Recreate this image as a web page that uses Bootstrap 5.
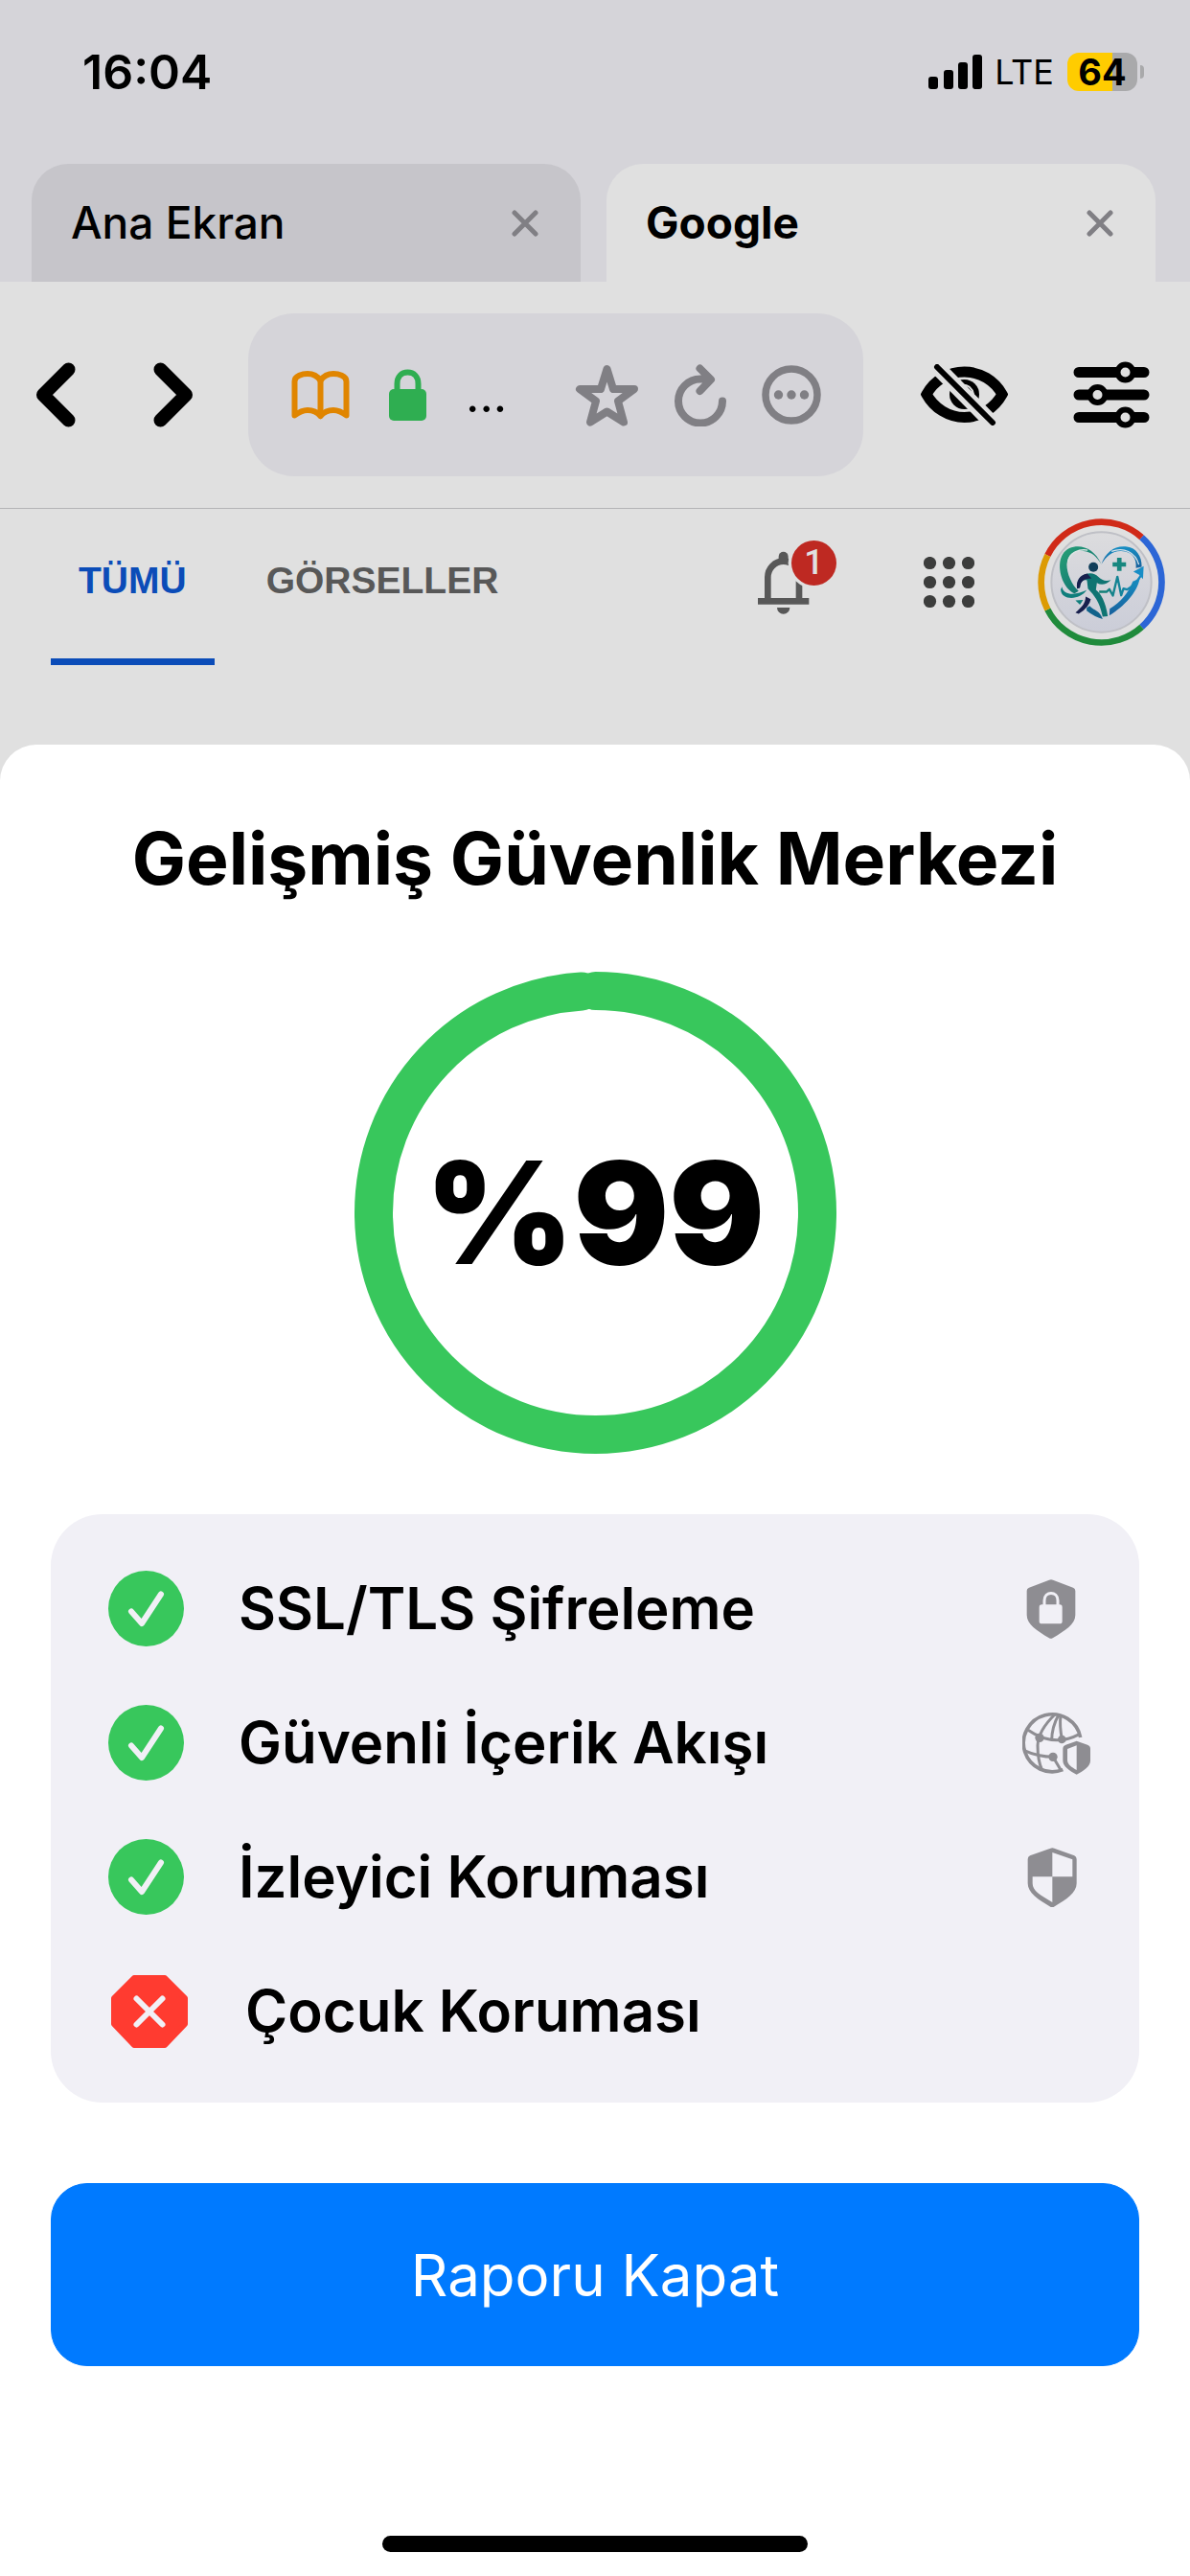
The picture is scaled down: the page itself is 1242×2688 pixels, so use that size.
<!DOCTYPE html>
<html lang="tr">
<head>
  <meta charset="UTF-8" />
  <meta name="viewport" content="width=device-width, initial-scale=1.0" />
  <title>Gelişmiş Güvenlik Merkezi</title>
  <link
    href="https://cdn.jsdelivr.net/npm/bootstrap@5.3.3/dist/css/bootstrap.min.css"
    rel="stylesheet"
  />
  <style>
    body {
      background: #e0e0e0;
      color: #000;
      font-family: Inter, "Liberation Sans", sans-serif;
    }
    svg { display: block; flex-shrink: 0; }
    .icon-btn {
      display: block;
      flex-shrink: 0;
      padding: 0;
      border: 0;
      background: none;
      color: inherit;
    }
    .stroke-icon {
      fill: none;
      stroke: currentColor;
      stroke-linecap: round;
      stroke-linejoin: round;
    }

    /* status bar and tabs */
    .top-area { background: #d5d4d9; }
    .status-bar { height: 150px; padding: 0 48px 0 86px; }
    .clock { font-size: 50px; font-weight: 600; }
    .carrier { font-size: 36px; margin: 0 14px 0 12px; }
    .battery {
      width: 73px;
      height: 40px;
      border-radius: 12px;
      background: linear-gradient(to right, #ffcc00 64%, #a9a9ab 64%);
      font-size: 38px;
      font-weight: 700;
      line-height: 40px;
    }
    .battery-cap { width: 4px; height: 14px; margin-left: 3px; border-radius: 0 4px 4px 0; background: #a9a9ab; }
    .tab-strip { gap: 27px; padding: 21px 36px 0 33px; }
    .page-tab {
      flex: 1 1 0;
      height: 123px;
      padding: 0 44px 0 41px;
      border-radius: 38px 38px 0 0;
      background: #c6c5ca;
      font-size: 46px;
      font-weight: 500;
    }
    .page-tab.current { background: #e0e0e0; font-weight: 700; }
    .page-tab a { color: #000; text-decoration: none; }
    .page-tab .icon-btn { color: #807f84; }

    /* toolbar */
    .toolbar { padding: 33px 42px 33px 37px; border-bottom: 1px solid #b4b4b6; }
    .history-btns { gap: 81px; }
    .tool-btns { gap: 68px; }
    .address-box {
      flex: 1 1 0;
      min-width: 0;
      height: 170px;
      gap: 37px;
      margin: 0 60px 0 57px;
      padding: 0 44px 0 45px;
      border-radius: 48px;
      background: #d5d4d9;
      color: #807f84;
    }
    .reader-icon { color: #e08500; }
    .lock-icon { color: #2fae51; }
    .address-input {
      flex: 1 1 0;
      width: 0;
      min-width: 0;
      padding: 0;
      border: 0;
      background: none;
      color: #000;
      font-size: 50px;
    }

    /* search page header */
    .search-header { height: 246px; padding: 0 26px 0 53px; }
    .search-nav { gap: 25px; font-family: "Liberation Sans", Arial, sans-serif; }
    .search-nav a {
      padding: 55px 29px 61px;
      border-bottom: 7px solid transparent;
      color: #585858;
      font-size: 39px;
      font-weight: 700;
      line-height: 40px;
      text-decoration: none;
    }
    .search-nav a.current { border-color: #0b4cb8; color: #0b4cb8; }
    .header-tools { height: 133px; margin-top: 10px; }
    .apps-btn { margin: 0 66px 0 91px; }
    .notice-count {
      width: 47px;
      height: 47px;
      background: #be2922;
      color: #e0e0e0;
      font: 500 36px/47px Roboto, sans-serif;
    }

    /* report sheet */
    .sheet { padding: 71px 53px 25px; border-radius: 38px 38px 0 0; background: #fff; }
    .sheet-title { margin: 0 0 70px; font-size: 75px; font-weight: 700; line-height: 96px; }
    .score-ring { width: 503px; height: 503px; }
    .score-text { font-size: 148px; font-weight: 900; line-height: 1; }
    .check-list {
      gap: 61px;
      margin: 63px 0 84px;
      padding: 59px 50px 56px 60px;
      border-radius: 54px;
      background: #f1f0f6;
      font-size: 60px;
      font-weight: 600;
      line-height: 79px;
    }
    .check-list li { gap: 57px; }
    .check-list .kind { color: #8e8d92; }
    .check-list .sign { color: #f1f0f6; stroke-width: 6px; }
    .close-report {
      --bs-btn-bg: #007aff;
      --bs-btn-border-color: #007aff;
      height: 191px;
      border-radius: 38px;
      font-size: 60px;
      font-weight: 400;
    }
    .home-indicator { width: 444px; height: 17px; border-radius: 9px; background: #000; }
  </style>
</head>
<body class="d-flex flex-column min-vh-100">

  <header class="top-area">
    <div class="status-bar d-flex align-items-center">
      <span class="clock me-auto">16:04</span>
      <svg width="57" height="36" viewBox="0 0 57 36" aria-hidden="true">
        <rect x="0" y="23" width="10" height="13" rx="3"/>
        <rect x="16" y="16" width="10" height="20" rx="3"/>
        <rect x="31" y="8" width="10" height="28" rx="3"/>
        <rect x="46" y="0" width="10" height="36" rx="3"/>
      </svg>
      <span class="carrier">LTE</span>
      <span class="battery text-center">64</span>
      <span class="battery-cap"></span>
    </div>

    <nav class="tab-strip d-flex">
      <div class="page-tab d-flex align-items-center justify-content-between">
        <a href="#">Ana Ekran</a>
        <button type="button" class="icon-btn" aria-label="Sekmeyi kapat">
          <svg class="stroke-icon" width="28" height="28" viewBox="0 0 28 28" stroke-width="5"><path d="M3 3l22 22M25 3L3 25"/></svg>
        </button>
      </div>
      <div class="page-tab current d-flex align-items-center justify-content-between">
        <a href="#">Google</a>
        <button type="button" class="icon-btn" aria-label="Sekmeyi kapat">
          <svg class="stroke-icon" width="28" height="28" viewBox="0 0 28 28" stroke-width="5"><path d="M3 3l22 22M25 3L3 25"/></svg>
        </button>
      </div>
    </nav>
  </header>

  <div class="toolbar d-flex align-items-center">
    <div class="history-btns d-flex">
      <button type="button" class="icon-btn" aria-label="Geri">
        <svg class="stroke-icon" width="42" height="68" viewBox="0 0 42 68" stroke-width="14"><path d="M34.5 7.5L8 34l26.5 26.500"/></svg>
      </button>
      <button type="button" class="icon-btn" aria-label="İleri">
        <svg class="stroke-icon" width="42" height="68" viewBox="0 0 42 68" stroke-width="14"><path d="M7.5 7.5L34 34 7.5 60.5"/></svg>
      </button>
    </div>

    <div class="address-box d-flex align-items-center">
      <button type="button" class="icon-btn reader-icon" aria-label="Okuyucu">
        <svg class="stroke-icon" width="61" height="52" viewBox="0 0 61 52" stroke-width="6">
          <path d="M30.500 11C27 6 22 4 17 4S3.500 6 3.500 12V47.500C8 44 12 42 17 42S27 44 30.500 48V11"/>
          <path d="M30.500 11C34 6 39 4 44 4S57.500 6 57.500 12V47.500C53 44 49 42 44 42S34 44 30.500 48"/>
        </svg>
      </button>
      <svg class="lock-icon mx-1" width="39" height="54" viewBox="0 0 39 54" aria-hidden="true">
        <path d="M8.500 24V15.500C8.500 8 13 3.500 19.500 3.500S30.500 8 30.500 15.500V24" fill="none" stroke="currentColor" stroke-width="6"/>
        <rect y="21" width="39" height="33" rx="5" fill="currentColor"/>
      </svg>
      <input class="address-input" type="text" value="..." aria-label="Adres" />
      <button type="button" class="icon-btn" aria-label="Favorilere ekle">
        <svg class="stroke-icon" width="67" height="65" viewBox="0 0 67 65" stroke-width="8"><path d="M33.500 5L40 26H62L45 38.500 51 60.500 33.500 49.500 16 60.500 22 38.500 5 26H27Z"/></svg>
      </button>
      <button type="button" class="icon-btn" aria-label="Yenile">
        <svg class="stroke-icon" width="54" height="65" viewBox="0 0 54 65" stroke-width="8"><path d="M50 38.500A23 23 0 1 1 27 15.500H37M26.500 4.500L38 16 26.500 28"/></svg>
      </button>
      <button type="button" class="icon-btn" aria-label="Diğer">
        <svg width="62" height="62" viewBox="0 0 62 62" fill="currentColor">
          <circle cx="31" cy="31" r="27" fill="none" stroke="currentColor" stroke-width="7.5"/>
          <circle cx="17.5" cy="31" r="4.7"/><circle cx="31" cy="31" r="4.7"/><circle cx="44.5" cy="31" r="4.7"/>
        </svg>
      </button>
    </div>

    <div class="tool-btns d-flex align-items-center">
      <button type="button" class="icon-btn" aria-label="Gizli mod">
        <svg width="91" height="64" viewBox="0 0 91 64">
          <path d="M6 31.500C14 17 29 8 45.500 8S77 17 85 31.500C77 46 62 55.500 45.500 55.500S14 46 6 31.500Z" fill="none" stroke="#000" stroke-width="11"/>
          <circle cx="45.5" cy="31.5" r="15.5"/>
          <path d="M42 21.500Q53 21 55 31.500" fill="none" stroke="#e0e0e0" stroke-width="2"/>
          <path d="M12 -2L80 67" stroke="#e0e0e0" stroke-width="16"/>
          <path d="M17 3L75 61" stroke="#000" stroke-width="6" stroke-linecap="round"/>
        </svg>
      </button>
      <button type="button" class="icon-btn" aria-label="Ayarlar">
        <svg width="80" height="70" viewBox="0 0 80 70">
          <path d="M6 11.500H74M6 35H74M6 58.500H74" stroke="#000" stroke-width="11" stroke-linecap="round"/>
          <g fill="#e0e0e0" stroke="#000" stroke-width="6"><circle cx="54.5" cy="11.5" r="8"/><circle cx="25.5" cy="35" r="8"/><circle cx="54.5" cy="58.5" r="8"/></g>
        </svg>
      </button>
    </div>
  </div>

  <div class="search-header d-flex align-items-start justify-content-between">
    <nav class="search-nav d-flex">
      <a href="#" class="current">TÜMÜ</a>
      <a href="#">GÖRSELLER</a>
    </nav>
    <div class="header-tools d-flex align-items-center">
      <button type="button" class="icon-btn position-relative" aria-label="Bildirimler">
        <svg width="82" height="87" viewBox="154 132 246 261" fill="#585858">
          <path d="M154 312h160v20H154zM214 342h40a20 20 0 0 1-40 0z"/>
          <path d="M219 205V182a15 15 0 0 1 30 0V205z"/>
          <path d="M185 314V247a49 50 0 0 1 98 0V314" fill="none" stroke="#585858" stroke-width="20"/>
          <circle cx="329" cy="202" r="80" fill="#e0e0e0"/>
        </svg>
        <span class="notice-count position-absolute top-0 end-0 rounded-circle text-center">1</span>
      </button>
      <button type="button" class="icon-btn apps-btn" aria-label="Uygulamalar">
        <svg width="53" height="53" viewBox="0 0 53 53" fill="#3c3d3c">
          <circle cx="6.5" cy="6.5" r="6.6"/><circle cx="26.5" cy="6.5" r="6.6"/><circle cx="46.5" cy="6.5" r="6.6"/>
          <circle cx="6.5" cy="26.5" r="6.6"/><circle cx="26.5" cy="26.5" r="6.6"/><circle cx="46.5" cy="26.5" r="6.6"/>
          <circle cx="6.5" cy="46.5" r="6.6"/><circle cx="26.5" cy="46.5" r="6.6"/><circle cx="46.5" cy="46.5" r="6.6"/>
        </svg>
      </button>
      <a href="#" aria-label="Hesap">
        <svg width="133" height="133" viewBox="69 63 398 398">
          <defs>
            <linearGradient id="disc" x1="0" y1="0" x2="0" y2="1"><stop offset="0" stop-color="#dcdcde"/><stop offset="1" stop-color="#cbcdd8"/></linearGradient>
            <linearGradient id="leaf" x1="0" y1="0" x2="1" y2="1"><stop offset="0" stop-color="#27a277"/><stop offset="1" stop-color="#0b6470"/></linearGradient>
            <linearGradient id="sea" x1="0" y1="0" x2="0" y2="1"><stop offset="0" stop-color="#178fc4"/><stop offset="1" stop-color="#17609c"/></linearGradient>
            <linearGradient id="pulse" x1="0" y1="0" x2="1" y2="0"><stop offset="0" stop-color="#128070"/><stop offset="1" stop-color="#1788c4"/></linearGradient>
          </defs>
          <g fill="none" stroke-width="20">
            <path d="M100 178A188 188 0 0 1 394 122" stroke="#d02a18"/>
            <path d="M394 122A188 188 0 0 1 394 402" stroke="#2c66d6"/>
            <path d="M394 402A188 188 0 0 1 100 347" stroke="#208b3c"/>
            <path d="M100 347A188 188 0 0 1 100 178" stroke="#dc9b05"/>
          </g>
          <circle cx="268" cy="262" r="156" fill="url(#disc)" stroke="#bfc0c6" stroke-width="6"/>
          <!-- heart -->
          <path d="M268 206C246 156 203 141 168 156C132 173 132 225 150 262C160 280 170 292 184 297L197 290C175 270 160 235 160 207C163 175 184 161 212 165C238 168 252 181 268 206Z" fill="url(#leaf)"/>
          <path d="M164 198C168 168 199 158 225 162" fill="none" stroke="#dce5e3" stroke-width="4"/>
          <path d="M268 206C281 168 310 146 348 151C376 154 395 180 394 214L376 218C379 188 364 166 330 165C302 164 283 182 268 206Z" fill="url(#sea)"/>
          <path d="M300 166C337 151 374 168 385 207" fill="none" stroke="#dce3e9" stroke-width="4"/>
          <path d="M388 250C380 294 340 337 293 366L294 345C329 324 353 295 366 260Z" fill="url(#sea)"/>
          <path d="M222 342L231 336C247 352 263 350 272 377Q246 370 222 351Z" fill="#10628b"/>
          <path d="M145 276C150 307 193 301 222 287C202 318 143 321 141 285ZM187 319L211 317 201 332Z" fill="#0f7e7c"/>
          <!-- cross, pulse and arrow -->
          <path d="M317 186h14v14h14v13h-14v14h-14v-14h-14v-13h14z" fill="#17877f"/>
          <path d="M261 292H284L293 284 304 304 318 245 330 303 337 282 348 285Q372 273 392 241" fill="none" stroke="url(#pulse)" stroke-width="7" stroke-linejoin="round"/>
          <path d="M368 229L400 212 398 252 386 239Z" fill="#178dc6"/>
          <!-- runner -->
          <circle cx="243" cy="215" r="15" fill="#103e5a"/>
          <path d="M226 235C201 240 190 256 192 282L201 279C202 260 212 253 223 256L226 282C246 304 262 320 272 370L288 368C281 323 267 298 251 286L254 264Q275 277 298 255Q275 263 258 245Q246 232 226 235Z" fill="#0f7472"/>
          <path d="M224 235C199 240 189 258 192 282L201 279C204 254 216 252 237 250Z" fill="#171f4d"/>
          <path d="M219 307L235 315Q230 341 197 361L187 357C204 342 218 331 219 307Z" fill="#171f4d"/>
        </svg>
      </a>
    </div>
  </div>

  <main class="sheet d-flex flex-column align-items-center flex-grow-1">
    <h1 class="sheet-title text-center">Gelişmiş Güvenlik Merkezi</h1>

    <div class="score-ring position-relative d-flex align-items-center justify-content-center">
      <svg class="position-absolute top-0 start-0" width="503" height="503" viewBox="0 0 503 503" aria-hidden="true">
        <circle cx="251.5" cy="251.5" r="231.5" fill="none" stroke="#38c75c" stroke-width="40" stroke-linecap="round" pathLength="100" stroke-dasharray="99 1" transform="rotate(-90 251.5 251.5)"/>
      </svg>
      <span class="score-text position-relative">%99</span>
    </div>

    <ul class="check-list list-unstyled d-flex flex-column align-self-stretch">
      <li class="d-flex align-items-center">
        <svg width="79" height="79" viewBox="0 0 79 79"><circle cx="39.5" cy="39.5" r="39.5" fill="#38c75c"/><path class="stroke-icon sign" d="M24 42.500L35 55 55 24.500"/></svg>
        <span class="me-auto">SSL/TLS Şifreleme</span>
        <svg class="kind" width="72" height="62" viewBox="142 233 216 186">
          <path d="M226 235Q232 233 238 235L301 259Q308 262 308 269V345C308 374 276 394 237 417Q231 420 226 417C187 394 156 374 156 345V269Q156 262 163 259Z" fill="currentColor"/>
          <path d="M211 318V299C211 269 253 269 253 299V318" fill="none" stroke="#f1f0f6" stroke-width="9"/>
          <rect x="195" y="312" width="72" height="60" rx="8" fill="#f1f0f6"/>
        </svg>
      </li>
      <li class="d-flex align-items-center">
        <svg width="79" height="79" viewBox="0 0 79 79"><circle cx="39.5" cy="39.5" r="39.5" fill="#38c75c"/><path class="stroke-icon sign" d="M24 42.500L35 55 55 24.500"/></svg>
        <span class="me-auto">Güvenli İçerik Akışı</span>
        <svg class="kind" width="72" height="66" viewBox="142 646 216 198">
          <g fill="none" stroke="currentColor" stroke-width="9">
            <path d="M324 727A90 90 0 1 0 269 828" stroke-width="11"/>
            <path d="M160 704Q240 760 322 716M148 768Q192 788 240 788M244 655Q192 705 190 752Q190 800 204 830M256 656Q234 694 234 738M262 658Q258 690 266 732M238 788L262 828"/>
          </g>
          <g fill="currentColor"><circle cx="196" cy="728" r="14"/><circle cx="266" cy="733" r="13"/><circle cx="238" cy="788" r="14"/></g>
          <path d="M312 738L346 750Q355 753 355 762V800C355 818 334 832 312 843C290 832 269 818 269 800V762Q269 753 278 750Z" fill="currentColor" stroke="#f1f0f6" stroke-width="16" paint-order="stroke"/>
          <path d="M312 752L283 763V798C283 811 297 820 312 829Z" fill="#f1f0f6"/>
        </svg>
      </li>
      <li class="d-flex align-items-center">
        <svg width="79" height="79" viewBox="0 0 79 79"><circle cx="39.5" cy="39.5" r="39.5" fill="#38c75c"/><path class="stroke-icon sign" d="M24 42.500L35 55 55 24.500"/></svg>
        <span class="me-auto">İzleyici Koruması</span>
        <svg class="kind" width="72" height="62" viewBox="142 1073 216 186">
          <path d="M230 1075Q236 1073 242 1075L305 1098Q312 1101 312 1109V1185C312 1214 280 1236 241 1258Q235 1261 230 1258C191 1236 159 1214 159 1185V1109Q159 1101 166 1098Z" fill="currentColor"/>
          <path d="M236 1088L299 1110V1164H236ZM236 1164V1244C198 1222 174 1208 174 1185V1164Z" fill="#f1f0f6"/>
        </svg>
      </li>
      <li class="d-flex align-items-center">
        <svg width="86" height="79" viewBox="0 0 86 79">
          <path d="M27 5H59L80 26V53L59 75H27L6 53V26Z" fill="#ff3b30" stroke="#ff3b30" stroke-width="6" stroke-linejoin="round"/>
          <path class="stroke-icon sign" d="M29.500 26.500L56.500 53.500M56.500 26.500L29.500 53.500"/>
        </svg>
        <span>Çocuk Koruması</span>
      </li>
    </ul>

    <button type="button" class="close-report btn btn-primary w-100">Raporu Kapat</button>

    <div class="home-indicator mt-auto"></div>
  </main>

  <script src="https://cdn.jsdelivr.net/npm/bootstrap@5.3.3/dist/js/bootstrap.bundle.min.js"></script>
</body>
</html>
